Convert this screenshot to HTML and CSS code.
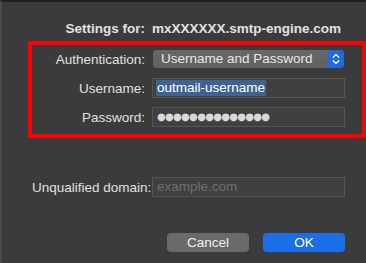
FILE: index.html
```html
<!DOCTYPE html>
<html lang="en">
<head>
  <meta charset="UTF-8">
  <meta name="viewport" content="width=device-width, initial-scale=1.0">
  <title>SMTP Server Settings</title>
  <link rel="stylesheet" href="styles.css">
</head>
<body>
  <div class="dialog">
    <div class="form">
      <span class="label title">Settings for:</span>
      <span class="value title">mxXXXXXX.smtp-engine.com</span>
    </div>

    <div class="form highlight">
      <span class="label">Authentication:</span>
      <div class="popup">
        <span class="popup-text">Username and Password</span>
        <span class="popup-arrows">
          <svg width="8" height="12" viewBox="0 0 8 12">
            <path d="M1.2 4.2 L4 1.6 L6.8 4.2 M1.2 7.8 L4 10.4 L6.8 7.8" fill="none" stroke="#fff" stroke-width="1.3" stroke-linecap="round" stroke-linejoin="round"/>
          </svg>
        </span>
      </div>

      <span class="label">Username:</span>
      <div class="field"><span class="selected">outmail-username</span></div>

      <span class="label">Password:</span>
      <div class="field dots">●●●●●●●●●●●●●●</div>
    </div>

    <div class="form domain">
      <span class="label">Unqualified domain:</span>
      <div class="field placeholder">example.com</div>
    </div>

    <div class="actions">
      <button class="btn cancel">Cancel</button>
      <button class="btn ok">OK</button>
    </div>
  </div>
</body>
</html>
```

FILE: styles.css
```css
html, body {
  margin: 0;
  padding: 0;
  background: #3a3a3a;
}
.dialog {
  box-sizing: border-box;
  width: 366px;
  height: 263px;
  padding: 16px 0 0 26px;
  border-top: 2px solid #1e1e1e;
  border-left: 2px solid #4a4a4a;
  background: #3b3b3b;
  font-family: "Liberation Sans", Arial, sans-serif;
  font-size: 13.5px;
  color: #e0e0e0;
}
.form {
  display: grid;
  grid-template-columns: 113px 193px;
  grid-auto-rows: 20px;
  column-gap: 7px;
  row-gap: 9px;
  align-items: center;
  padding-left: 4px;
}
.label {
  text-align: right;
  white-space: nowrap;
}
.title {
  font-weight: bold;
  color: #e2e2e2;
  white-space: nowrap;
}
.highlight {
  margin-top: 3px;
  border: 4px solid #fe0000;
  padding: 4px 10px 7px 0;
}
.popup {
  display: flex;
  height: 18px;
  margin: 0 1px;
  border-radius: 4px;
  background: linear-gradient(#686868, #606060);
  overflow: hidden;
}
.popup-text {
  flex: 1;
  padding-left: 8px;
  line-height: 18px;
  color: #e8e8e8;
}
.popup-arrows {
  width: 16px;
  display: flex;
  align-items: center;
  justify-content: center;
  background: #1c6be0;
}
.field {
  box-sizing: border-box;
  height: 20px;
  padding: 0 3px;
  border: 1px solid #545454;
  background: #404040;
  line-height: 18px;
  white-space: nowrap;
}
.selected {
  display: inline-block;
  line-height: 16px;
  padding: 0 1px;
  background: #3f6390;
  color: #fff;
}
.dots {
  font-family: "DejaVu Sans", sans-serif;
  font-size: 10px;
  letter-spacing: -0.7px;
  color: #d8d8d8;
  padding-left: 4px;
}
.placeholder {
  color: #6e6e6e;
  padding-left: 4px;
}
.domain {
  margin-top: 39px;
}
.actions {
  display: flex;
  justify-content: flex-end;
  gap: 14px;
  margin-top: 36px;
  padding-right: 21px;
}
.btn {
  width: 82px;
  height: 19px;
  padding: 0;
  border: none;
  border-radius: 4px;
  font-family: "Liberation Sans", Arial, sans-serif;
  font-size: 13.5px;
  color: #f0f0f0;
}
.cancel {
  background: #6a6a6a;
}
.ok {
  background: #1b6ee6;
  color: #fff;
}
```
